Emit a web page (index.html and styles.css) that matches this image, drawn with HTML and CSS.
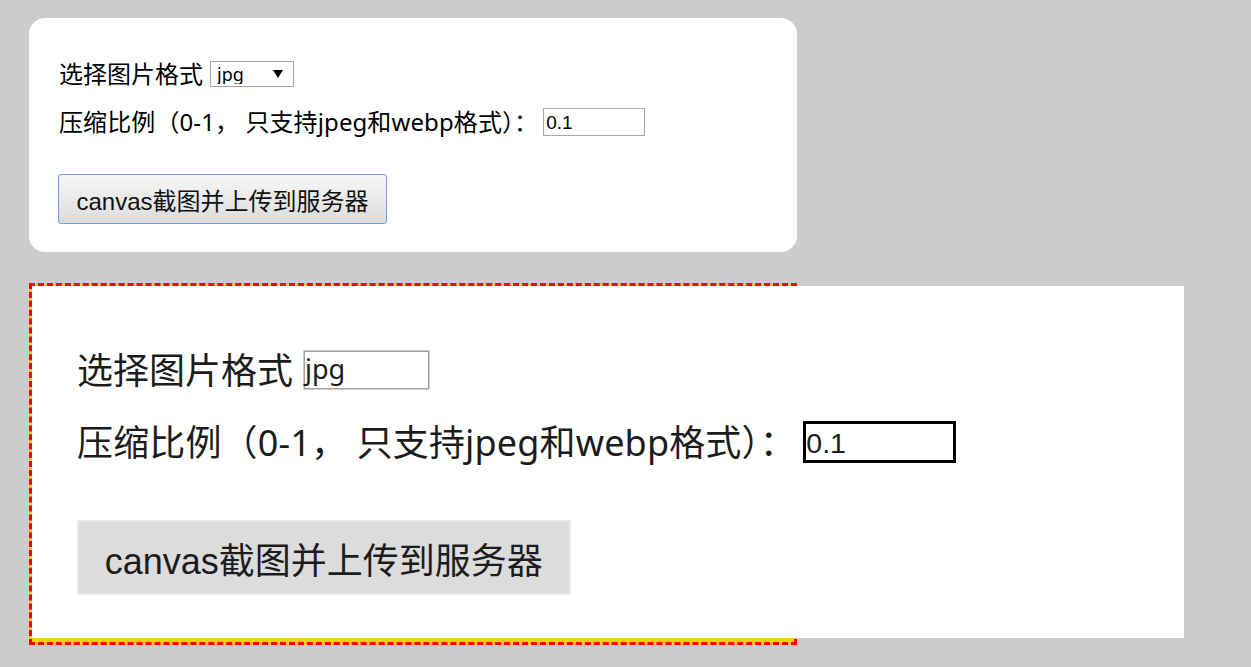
FILE: index.html
```html
<!DOCTYPE html>
<html lang="zh-CN">
<head>
<meta charset="utf-8">
<title>canvas截图</title>
<link rel="stylesheet" href="styles.css">
</head>
<body>
<div class="card">
  <div class="row row-format">
    <span class="label">选择图片格式</span>
    <span class="select-wrap">
      <select class="select"><option>jpg</option><option>png</option><option>webp</option></select>
      <svg class="arrow" width="10" height="8" viewBox="0 0 10 8"><path d="M0 0H10L5 8Z" fill="#000"/></svg>
    </span>
  </div>
  <div class="row row-quality">
    <span class="label">压缩比例（0-1， 只支持jpeg和webp格式）：</span>
    <input class="input" type="text" value="0.1">
  </div>
  <button class="btn">canvas截图并上传到服务器</button>
</div>

<div class="shot-frame">
  <div class="shot">
    <div class="shot-inner">
      <div class="row row-format">
        <span class="label">选择图片格式</span>
        <span class="select-wrap"><span class="select">jpg</span></span>
      </div>
      <div class="row row-quality">
        <span class="label">压缩比例（0-1， 只支持jpeg和webp格式）：</span>
        <span class="input">0.1</span>
      </div>
      <div class="btn">canvas截图并上传到服务器</div>
    </div>
  </div>
</div>
</body>
</html>
```

FILE: styles.css
```css
html, body {
  margin: 0;
  background: #cccccc;
}

body {
  padding: 18px 0 0 29px;
  font-family: "Noto Sans", "Noto Sans CJK SC", sans-serif;
  color: #000;
}

.card,
.shot-inner {
  box-sizing: border-box;
  width: 768px;
  height: 234px;
  padding: 43px 30px 0 30px;
  background: #fff;
  display: flex;
  flex-direction: column;
  align-items: flex-start;
}

.card {
  border-radius: 16px;
}

.row {
  display: flex;
  align-items: center;
}

.row-format {
  height: 26px;
  gap: 7px;
}

.row-quality {
  height: 28px;
  margin-top: 21px;
  gap: 5px;
}

.label {
  font-size: 24px;
  line-height: 30px;
  white-space: pre;
  font-family: "Noto Sans", "Noto Sans CJK SC", sans-serif;
}

.row-quality .label {
  letter-spacing: 0.1px;
}

.select-wrap {
  position: relative;
  display: inline-flex;
}

.select {
  appearance: none;
  -webkit-appearance: none;
  box-sizing: border-box;
  width: 84px;
  height: 26px;
  margin: 0;
  padding: 0 0 2px 6px;
  border: 1px solid #a6a6a6;
  border-radius: 0;
  background: #fff;
  font-family: "Noto Sans", "Open Sans", sans-serif;
  font-size: 18px;
  color: #000;
  outline: none;
}

.arrow {
  position: absolute;
  right: 11px;
  top: 9px;
  pointer-events: none;
}

.input {
  box-sizing: border-box;
  width: 102px;
  height: 28px;
  margin: 0;
  padding: 1px 2px 0 2px;
  border: 1px solid #a9a9a9;
  font-family: "Liberation Sans", Arial, sans-serif;
  font-size: 19px;
  color: #000;
  outline: none;
}

.btn {
  box-sizing: border-box;
  width: 329px;
  height: 50px;
  margin: 38px 0 0 -1px;
  padding: 0;
  border: 1px solid #6f9de9;
  border-radius: 3px;
  background: linear-gradient(#f7f7f7, #dcdcdc);
  font-family: "Liberation Sans", Arial, "Noto Sans CJK SC", sans-serif;
  font-size: 24px;
  color: #111;
}

/* snapshot (rendered canvas picture, 1.5x) */

.shot-frame {
  box-sizing: border-box;
  width: 768px;
  height: 362px;
  margin-top: 31px;
  border: 3px dashed #ff0000;
  background: #e4d41c;
}

.shot {
  width: 1152px;
  height: 352px;
  background: #fff;
}

.shot-inner {
  transform: scale(1.5);
  transform-origin: 0 0;
  color: #1c1c1c;
}

.shot-inner .label {
  color: #1c1c1c;
}

.shot-inner .select {
  display: flex;
  align-items: center;
  padding: 0 0 2px 0;
  border: 1px solid #a0a0a0;
  color: #1c1c1c;
}

.shot-inner .input {
  display: flex;
  align-items: center;
  padding: 1px 0 0 0;
  border: 2px solid #000;
  color: #1c1c1c;
}

.shot-inner .btn {
  display: flex;
  align-items: center;
  justify-content: center;
  margin-left: 0;
  border: 1px solid #ececec;
  border-radius: 0;
  background: #dcdcdc;
  color: #1c1c1c;
}
```
